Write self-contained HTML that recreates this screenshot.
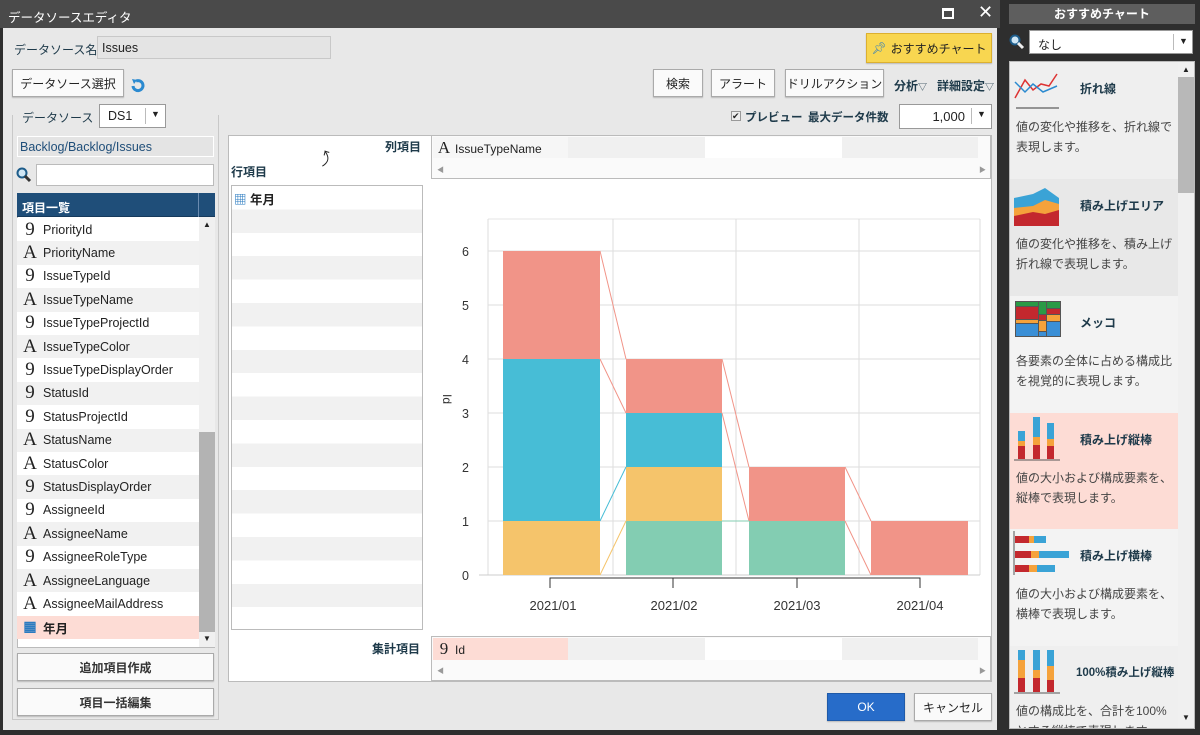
<!DOCTYPE html>
<html><head><meta charset="utf-8"><style>
*{box-sizing:border-box;margin:0;padding:0}
body{width:1200px;height:735px;overflow:hidden;background:#2e2e2e;font-family:"Liberation Sans","Noto Sans CJK JP",sans-serif;font-size:12px;color:#222;position:relative}
.a{position:absolute}
.btn{position:absolute;background:#fafafa;border:1px solid #aaa;box-shadow:0 1px 1px #bbb;display:flex;align-items:center;justify-content:center;font-size:12px;color:#222}
.lbl{position:absolute;font-size:12px;color:#1e3a4a;white-space:nowrap}
.row{position:absolute;left:17px;width:182px;height:23.4px;display:flex;align-items:center;font-size:12.5px;color:#222}
.ic{display:inline-block;font-family:"Liberation Serif",serif;font-size:19px;width:26px;text-align:center;color:#222}
.ri{position:absolute;left:1010px;width:168px;height:117px}
.rt{position:absolute;left:70px;font-size:12px;font-weight:bold;color:#1e3a4a;white-space:nowrap}
.rd{position:absolute;left:6px;font-size:12px;line-height:20px;color:#444;width:162px}
</style></head><body>
<!-- dialog -->
<div class="a" style="left:0;top:0;width:1000px;height:28px;background:#4a4a4a"></div>
<div class="a" style="left:8px;top:7px;color:#fff;font-size:12.5px">データソースエディタ</div>
<div class="a" style="left:942px;top:8px;width:12px;height:11px;border:2px solid #fff;border-top-width:3px"></div>
<div class="a" style="left:978px;top:2px;color:#fff;font-size:18px">✕</div>
<div class="a" style="left:3px;top:28px;width:994px;height:702px;background:#e8e8e8"></div>

<div class="lbl" style="left:14px;top:41px">データソース名</div>
<div class="a" style="left:97px;top:36px;width:234px;height:23px;background:#e4e4e4;border:1px solid #c8c8c8;padding:4px 4px;font-size:12.5px">Issues</div>
<div class="btn" style="left:12px;top:69px;width:112px;height:28px">データソース選択</div>
<svg class="a" style="left:130px;top:77px" width="16" height="16" viewBox="0 0 16 16"><path d="M3 9a5 5 0 1 0 3-5" fill="none" stroke="#2b8ad0" stroke-width="3"/><path d="M2 2l5 1-3 4z" fill="#2b8ad0"/></svg>

<div class="a" style="left:12px;top:115px;width:207px;height:605px;border:1px solid #c8c8c8;border-top:none"></div>
<div class="a" style="left:14px;top:104px;width:90px;height:24px;background:#e8e8e8"></div>
<div class="lbl" style="left:22px;top:109px">データソース</div>
<div class="a" style="left:99px;top:104px;width:67px;height:24px;background:#fff;border:1px solid #999;padding:4px 8px;font-size:12.5px">DS1</div>
<div class="a" style="left:145px;top:108px;width:1px;height:16px;background:#bbb"></div>
<div class="a" style="left:151px;top:109px;font-size:9px">▼</div>
<div class="a" style="left:17px;top:136px;width:197px;height:21px;background:#e4e4e4;border:1px solid #fff;padding:3px 2px;color:#1f4e79;font-size:12.5px">Backlog/Backlog/Issues</div>
<svg class="a" style="left:16px;top:167px" width="16" height="16"><circle cx="6" cy="6" r="4.5" fill="#cfe6f5" stroke="#1d5c8a" stroke-width="2"/><path d="M9 9l5 5" stroke="#333" stroke-width="3"/></svg>
<div class="a" style="left:36px;top:164px;width:178px;height:22px;background:#fff;border:1px solid #bbb"></div>

<div class="a" style="left:17px;top:193px;width:198px;height:455px;background:#fff;border:1px solid #bbb"></div>
<div class="a" style="left:17px;top:193px;width:198px;height:24px;background:#1f4e79;border-bottom:1px solid #163a5c"></div>
<div class="a" style="left:198px;top:193px;width:1px;height:24px;background:#6a8bb0"></div>
<div class="a" style="left:22px;top:199px;color:#fff;font-weight:bold;font-size:12px">項目一覧</div>
<div class="a" style="left:199px;top:217px;width:16px;height:430px;background:#f0f0f0"></div>
<div class="a" style="left:199px;top:432px;width:16px;height:200px;background:#b3b3b3"></div>
<div class="a" style="left:203px;top:220px;font-size:8px">▲</div>
<div class="a" style="left:203px;top:634px;font-size:8px">▼</div>

<div class="row" style="top:218px;background:#fff"><span class="ic">9</span>PriorityId</div>
<div class="row" style="top:241.4px;background:#f1f1f1"><span class="ic">A</span>PriorityName</div>
<div class="row" style="top:264.8px;background:#fff"><span class="ic">9</span>IssueTypeId</div>
<div class="row" style="top:288.2px;background:#f1f1f1"><span class="ic">A</span>IssueTypeName</div>
<div class="row" style="top:311.6px;background:#fff"><span class="ic">9</span>IssueTypeProjectId</div>
<div class="row" style="top:335px;background:#f1f1f1"><span class="ic">A</span>IssueTypeColor</div>
<div class="row" style="top:358.4px;background:#fff"><span class="ic">9</span>IssueTypeDisplayOrder</div>
<div class="row" style="top:381.8px;background:#f1f1f1"><span class="ic">9</span>StatusId</div>
<div class="row" style="top:405.2px;background:#fff"><span class="ic">9</span>StatusProjectId</div>
<div class="row" style="top:428.6px;background:#f1f1f1"><span class="ic">A</span>StatusName</div>
<div class="row" style="top:452px;background:#fff"><span class="ic">A</span>StatusColor</div>
<div class="row" style="top:475.4px;background:#f1f1f1"><span class="ic">9</span>StatusDisplayOrder</div>
<div class="row" style="top:498.8px;background:#fff"><span class="ic">9</span>AssigneeId</div>
<div class="row" style="top:522.2px;background:#f1f1f1"><span class="ic">A</span>AssigneeName</div>
<div class="row" style="top:545.6px;background:#fff"><span class="ic">9</span>AssigneeRoleType</div>
<div class="row" style="top:569px;background:#f1f1f1"><span class="ic">A</span>AssigneeLanguage</div>
<div class="row" style="top:592.4px;background:#fff"><span class="ic">A</span>AssigneeMailAddress</div>
<div class="row" style="top:615.8px;background:#fddcd5;font-weight:bold"><span class="ic" style="font-size:14px;color:#2b7bc0">▦</span>年月</div>

<div class="btn" style="left:17px;top:653px;width:197px;height:28px;font-weight:bold;color:#333">追加項目作成</div>
<div class="btn" style="left:17px;top:688px;width:197px;height:28px;font-weight:bold;color:#333">項目一括編集</div>

<!-- middle -->
<div class="a" style="left:228px;top:135px;width:764px;height:547px;background:#fff;border:1px solid #bbb"></div>
<div class="lbl" style="left:385px;top:138px;font-weight:bold">列項目</div>
<div class="a" style="left:318px;top:148px;font-size:14px;transform:rotate(-30deg)">⤴</div>
<div class="lbl" style="left:231px;top:163px;font-weight:bold">行項目</div>
<div class="a" style="left:231px;top:185px;width:192px;height:445px;border:1px solid #bbb;background:repeating-linear-gradient(#fff 0 23.4px,#f1f1f1 23.4px 46.8px)"></div>
<div class="a" style="left:234px;top:189px;font-weight:bold;font-size:12.5px"><span style="color:#2b7bc0">▦</span> 年月</div>
<div class="a" style="left:431px;top:135px;width:560px;height:44px;border:1px solid #bbb;background:#fafafa"></div>
<div class="a" style="left:433px;top:137px;width:135px;height:21px;background:#f6f6f6;font-size:12px;padding-top:1px"><span class="ic" style="font-size:17px;width:22px">A</span>IssueTypeName</div>
<div class="a" style="left:568px;top:137px;width:137px;height:21px;background:#f0f0f0"></div>
<div class="a" style="left:705px;top:137px;width:137px;height:21px;background:#fff"></div>
<div class="a" style="left:842px;top:137px;width:136px;height:21px;background:#f0f0f0"></div>
<div class="a" style="left:437px;top:165px;font-size:7px;color:#999">◀</div>
<div class="a" style="left:979px;top:165px;font-size:7px;color:#999">▶</div>

<svg class="a" style="left:431px;top:180px" width="560" height="450">
<g font-family="Liberation Sans" font-size="12.5" fill="#333">
<line x1="57" y1="39" x2="549" y2="39" stroke="#e4e4e4"/>
<g stroke="#ddd">
<line x1="57" y1="71" x2="549" y2="71"/><line x1="57" y1="125" x2="549" y2="125"/><line x1="57" y1="179" x2="549" y2="179"/><line x1="57" y1="233" x2="549" y2="233"/><line x1="57" y1="287" x2="549" y2="287"/><line x1="57" y1="341" x2="549" y2="341"/>
<line x1="182" y1="39" x2="182" y2="395"/><line x1="305" y1="39" x2="305" y2="395"/><line x1="428" y1="39" x2="428" y2="395"/>
<line x1="57" y1="39" x2="57" y2="395"/><line x1="549" y1="39" x2="549" y2="395"/>
</g>
<line x1="48" y1="395" x2="549" y2="395" stroke="#ccc"/>
<rect x="72" y="71" width="97" height="108" fill="#f19488"/>
<rect x="72" y="179" width="97" height="162" fill="#47bdd6"/>
<rect x="72" y="341" width="97" height="54" fill="#f5c46b"/>
<rect x="195" y="179" width="96" height="54" fill="#f19488"/>
<rect x="195" y="233" width="96" height="54" fill="#47bdd6"/>
<rect x="195" y="287" width="96" height="54" fill="#f5c46b"/>
<rect x="195" y="341" width="96" height="54" fill="#83cdb2"/>
<rect x="318" y="287" width="96" height="54" fill="#f19488"/>
<rect x="318" y="341" width="96" height="54" fill="#83cdb2"/>
<rect x="440" y="341" width="97" height="54" fill="#f19488"/>
<g stroke-width="1" fill="none">
<path d="M169 71L195 179M169 179L195 233M291 179L318 287M291 233L318 341M414 287L440 341M414 341L440 395" stroke="#f19488"/>
<path d="M169 341L195 287" stroke="#47bdd6"/><path d="M169 395L195 341" stroke="#f5c46b"/><path d="M291 341L318 341" stroke="#83cdb2"/>
</g>
<g text-anchor="end"><text x="38" y="76">6</text><text x="38" y="130">5</text><text x="38" y="184">4</text><text x="38" y="238">3</text><text x="38" y="292">2</text><text x="38" y="346">1</text><text x="38" y="400">0</text></g>
<text transform="translate(12 214) rotate(90)" font-size="12">Id</text>
<path d="M119 408V398H489V408M242 398V408M366 398V408" stroke="#333" fill="none"/>
<g text-anchor="middle" font-size="13"><text x="122" y="430">2021/01</text><text x="243" y="430">2021/02</text><text x="366" y="430">2021/03</text><text x="489" y="430">2021/04</text></g>
</g></svg>

<div class="lbl" style="left:372px;top:640px;font-weight:bold">集計項目</div>
<div class="a" style="left:431px;top:636px;width:560px;height:45px;border:1px solid #bbb;background:#fafafa"></div>
<div class="a" style="left:433px;top:638px;width:135px;height:22px;background:#fddcd5;font-size:12px;padding-top:1px"><span class="ic" style="font-size:17px;width:22px">9</span>Id</div>
<div class="a" style="left:568px;top:638px;width:137px;height:22px;background:#f0f0f0"></div>
<div class="a" style="left:705px;top:638px;width:137px;height:22px;background:#fff"></div>
<div class="a" style="left:842px;top:638px;width:136px;height:22px;background:#f0f0f0"></div>
<div class="a" style="left:437px;top:666px;font-size:7px;color:#999">◀</div>
<div class="a" style="left:979px;top:666px;font-size:7px;color:#999">▶</div>

<div class="btn" style="left:827px;top:693px;width:78px;height:28px;background:#276cc9;border-color:#1f5aa8;color:#fff">OK</div>
<div class="btn" style="left:914px;top:693px;width:78px;height:28px">キャンセル</div>

<div class="btn" style="left:866px;top:33px;width:126px;height:30px;background:#f8d650;border-color:#dcb030;color:#222"><span style="color:#2b7bc0;margin-right:4px">📌︎</span>おすすめチャート</div>
<div class="btn" style="left:653px;top:69px;width:50px;height:28px">検索</div>
<div class="btn" style="left:711px;top:69px;width:64px;height:28px">アラート</div>
<div class="btn" style="left:785px;top:69px;width:99px;height:28px">ドリルアクション</div>
<div class="lbl" style="left:894px;top:77px;font-weight:bold">分析<span style="font-size:9px;font-weight:normal">▽</span></div>
<div class="lbl" style="left:937px;top:77px;font-weight:bold">詳細設定<span style="font-size:9px;font-weight:normal">▽</span></div>
<div class="a" style="left:731px;top:111px;width:10px;height:10px;border:1px solid #999;background:#eee;font-size:9px;line-height:9px">✔</div>
<div class="lbl" style="left:745px;top:109px;font-weight:bold;font-size:11.5px">プレビュー</div>
<div class="lbl" style="left:808px;top:109px;font-weight:bold;font-size:11.5px">最大データ件数</div>
<div class="a" style="left:899px;top:104px;width:93px;height:25px;background:#fff;border:1px solid #999;padding:4px 26px 0 0;text-align:right;font-size:13px">1,000</div>
<div class="a" style="left:971px;top:108px;width:1px;height:16px;background:#bbb"></div>
<div class="a" style="left:977px;top:109px;font-size:9px">▼</div>

<!-- right panel -->
<div class="a" style="left:1009px;top:4px;width:186px;height:20px;background:#5e5e5e;color:#fff;font-weight:bold;text-align:center;line-height:20px;font-size:12px">おすすめチャート</div>
<svg class="a" style="left:1009px;top:34px" width="16" height="16"><circle cx="6" cy="6" r="4.5" fill="#cfe6f5" stroke="#1d5c8a" stroke-width="2"/><path d="M9 9l5 5" stroke="#eee" stroke-width="3"/></svg>
<div class="a" style="left:1029px;top:30px;width:164px;height:24px;background:#fff;border:1px solid #999;padding:5px 8px;font-size:12px">なし</div>
<div class="a" style="left:1173px;top:34px;width:1px;height:16px;background:#bbb"></div>
<div class="a" style="left:1179px;top:36px;font-size:9px">▼</div>
<div class="a" style="left:1009px;top:61px;width:186px;height:668px;background:#f3f3f3;border:1px solid #bbb"></div>
<div class="a" style="left:1178px;top:62px;width:16px;height:666px;background:#f0f0f0"></div>
<div class="a" style="left:1178px;top:77px;width:16px;height:116px;background:#b8b8b8"></div>
<div class="a" style="left:1182px;top:65px;font-size:8px">▲</div>
<div class="a" style="left:1182px;top:713px;font-size:8px">▼</div>

<div class="ri" style="top:62px;background:#efefef">
<svg class="a" style="left:3px;top:8px" width="50" height="40"><path d="M2 28L12 10L20 20L28 14L36 16L44 4" stroke="#d33" fill="none" stroke-width="1.5"/><path d="M2 12L12 22L20 14L30 22L44 16" stroke="#2b8ad0" fill="none" stroke-width="1.5"/><line x1="3" y1="38" x2="46" y2="38" stroke="#777" stroke-width="1.5"/></svg>
<div class="rt" style="top:18px">折れ線</div><div class="rd" style="top:55px">値の変化や推移を、折れ線で表現します。</div></div>
<div class="ri" style="top:179px;background:#e8e8e8">
<svg class="a" style="left:3px;top:9px" width="48" height="38"><path d="M1 10L20 6L32 0L46 10V38H1Z" fill="#3aa3d6"/><path d="M1 20L20 18L32 12L46 16V38H1Z" fill="#f5a23b"/><path d="M1 28L20 24L32 26L46 22V38H1Z" fill="#c3282e"/></svg>
<div class="rt" style="top:18px">積み上げエリア</div><div class="rd" style="top:55px">値の変化や推移を、積み上げ折れ線で表現します。</div></div>
<div class="ri" style="top:296px;background:#f3f3f3">
<svg class="a" style="left:5px;top:5px" width="46" height="36"><rect width="46" height="36" fill="#555"/><rect x="1" y="1" width="22" height="4" fill="#2a9a46"/><rect x="1" y="6" width="22" height="12" fill="#c3282e"/><rect x="1" y="19" width="22" height="3" fill="#f5a23b"/><rect x="1" y="23" width="22" height="12" fill="#3a8fd6"/><rect x="24" y="1" width="7" height="12" fill="#2a9a46"/><rect x="24" y="14" width="7" height="5" fill="#c3282e"/><rect x="24" y="20" width="7" height="10" fill="#f5a23b"/><rect x="24" y="31" width="7" height="4" fill="#3a8fd6"/><rect x="32" y="1" width="13" height="6" fill="#2a9a46"/><rect x="32" y="8" width="13" height="5" fill="#c3282e"/><rect x="32" y="14" width="13" height="6" fill="#f5a23b"/><rect x="32" y="21" width="13" height="14" fill="#3a8fd6"/></svg>
<div class="rt" style="top:18px">メッコ</div><div class="rd" style="top:55px">各要素の全体に占める構成比を視覚的に表現します。</div></div>
<div class="ri" style="top:413px;background:#fddcd5">
<svg class="a" style="left:3px;top:2px" width="48" height="46"><rect x="5" y="16" width="7" height="10" fill="#3aa3d6"/><rect x="5" y="26" width="7" height="5" fill="#f5a23b"/><rect x="5" y="31" width="7" height="13" fill="#c3282e"/><rect x="20" y="2" width="7" height="20" fill="#3aa3d6"/><rect x="20" y="22" width="7" height="8" fill="#f5a23b"/><rect x="20" y="30" width="7" height="14" fill="#c3282e"/><rect x="34" y="8" width="7" height="16" fill="#3aa3d6"/><rect x="34" y="24" width="7" height="7" fill="#f5a23b"/><rect x="34" y="31" width="7" height="13" fill="#c3282e"/><line x1="1" y1="45" x2="47" y2="45" stroke="#555"/></svg>
<div class="rt" style="top:18px">積み上げ縦棒</div><div class="rd" style="top:55px">値の大小および構成要素を、縦棒で表現します。</div></div>
<div class="ri" style="top:529px;background:#f3f3f3">
<svg class="a" style="left:3px;top:2px" width="58" height="44"><line x1="1" y1="0" x2="1" y2="44" stroke="#555"/><rect x="2" y="5" width="14" height="7" fill="#c3282e"/><rect x="16" y="5" width="5" height="7" fill="#f5a23b"/><rect x="21" y="5" width="12" height="7" fill="#3aa3d6"/><rect x="2" y="20" width="16" height="7" fill="#c3282e"/><rect x="18" y="20" width="8" height="7" fill="#f5a23b"/><rect x="26" y="20" width="30" height="7" fill="#3aa3d6"/><rect x="2" y="34" width="14" height="7" fill="#c3282e"/><rect x="16" y="34" width="8" height="7" fill="#f5a23b"/><rect x="24" y="34" width="18" height="7" fill="#3aa3d6"/></svg>
<div class="rt" style="top:18px">積み上げ横棒</div><div class="rd" style="top:55px">値の大小および構成要素を、横棒で表現します。</div></div>
<div class="ri" style="top:646px;background:#efefef;height:82px;overflow:hidden">
<svg class="a" style="left:3px;top:2px" width="48" height="46"><rect x="5" y="2" width="7" height="10" fill="#3aa3d6"/><rect x="5" y="12" width="7" height="18" fill="#f5a23b"/><rect x="5" y="30" width="7" height="14" fill="#c3282e"/><rect x="20" y="2" width="7" height="20" fill="#3aa3d6"/><rect x="20" y="22" width="7" height="8" fill="#f5a23b"/><rect x="20" y="30" width="7" height="14" fill="#c3282e"/><rect x="34" y="2" width="7" height="16" fill="#3aa3d6"/><rect x="34" y="18" width="7" height="14" fill="#f5a23b"/><rect x="34" y="32" width="7" height="12" fill="#c3282e"/><line x1="1" y1="45" x2="47" y2="45" stroke="#555"/></svg>
<div class="rt" style="top:18px;left:66px;font-size:11.5px">100%積み上げ縦棒</div><div class="rd" style="top:55px">値の構成比を、合計を100%とする縦棒で表現します。</div></div>
</body></html>
